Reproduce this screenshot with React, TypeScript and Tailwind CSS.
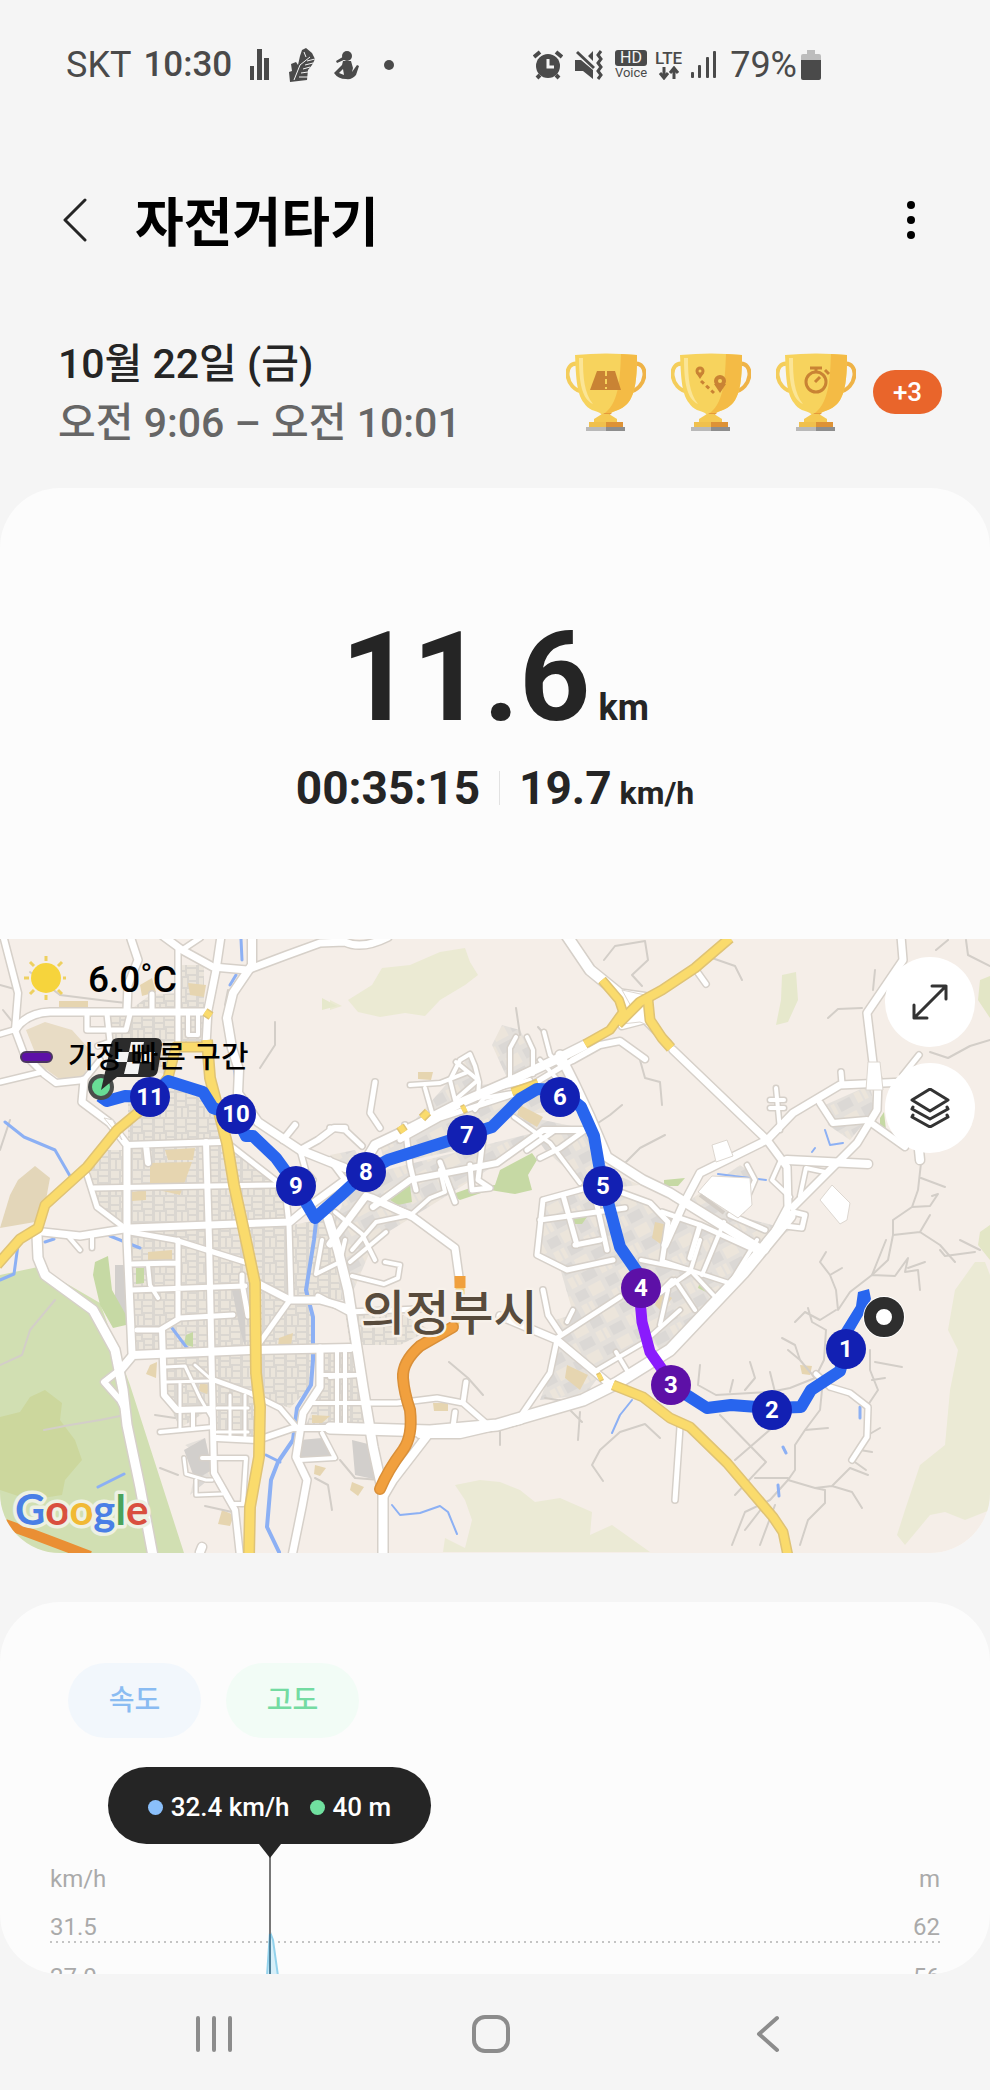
import React, { useState } from 'react';

interface Road {
  d: string;
  w: number;
}

interface KmMarker {
  label: string;
  x: number;
  y: number;
  fastest?: boolean;
}

const whiteRoads: Road[] = [
  // north west
  { d: 'M4 939 L18 993 L15 1030 L24 1054 L44 1074 L56 1083 L84 1080', w: 6 },
  { d: 'M15 1030 Q26 1013 50 1012 L208 1012', w: 7 },
  { d: 'M0 1034 L17 1029 M0 1082 L42 1072', w: 5 },
  { d: 'M131 939 L138 960 L128 985 L127 1010', w: 7 },
  { d: 'M178 950 L178 1048 M152 994 L152 1010 M87 1014 L87 1030 L126 1030 L130 1014 M107 1014 L110 1042 L98 1046', w: 5 },
  { d: 'M163 936 L182 950 L213 967 L247 970 L287 955 L320 943 L345 942 Q362 950 388 937', w: 7 },
  { d: 'M182 950 L200 938', w: 5 },
  { d: 'M221 936 L216 970 L208 1010 L206 1045', w: 7 },
  { d: 'M252 936 L252 965 L233 993 L227 1018 L232 1048 L239 1070 L238 1093 L258 1122 L300 1150 L345 1168', w: 8 },
  { d: 'M188 1014 L188 1035 L198 1035 L198 1014', w: 4 },
  { d: 'M84 1080 L82 1102 L110 1123 L127 1145 L127 1240 L132 1353', w: 7 },
  { d: 'M100 1060 L84 1080', w: 5 },
  { d: 'M127 1145 L220 1142 M146 1145 L148 1163', w: 6 },
  { d: 'M93 1188 L275 1185', w: 5 },
  { d: 'M43 1232 L80 1236 L130 1228 L290 1222 L308 1207 L345 1180', w: 7 },
  { d: 'M206 1142 L209 1240 L214 1473 L235 1510 L240 1556', w: 6 },
  { d: 'M226 1142 L285 1188 L289 1225 L291 1297', w: 5 },
  { d: 'M283 1140 L295 1125 M300 1150 L318 1140 L334 1128 L345 1128', w: 6 },
  { d: 'M300 1150 L306 1172 L313 1180', w: 5 },
  { d: 'M87 1175 L97 1207 L130 1232 L175 1240 L245 1262', w: 5 },
  { d: 'M68 1236 L80 1250 M92 1236 L92 1248', w: 4 },
  // west
  { d: 'M132 1290 L245 1286 M132 1264 L177 1263 M137 1330 L160 1330 L180 1318 L233 1315 M178 1240 L178 1318', w: 5 },
  { d: 'M148 1265 L150 1285 L158 1298', w: 4 },
  { d: 'M118 1373 L133 1355 L250 1350 L350 1348', w: 8 },
  { d: 'M162 1330 L164 1395 L177 1410 L212 1409', w: 6 },
  { d: 'M165 1367 L185 1366 L200 1398 L213 1420 M166 1382 L208 1381 M195 1365 L212 1380 M180 1382 L180 1430', w: 3 },
  { d: 'M160 1432 L213 1427 M193 1411 L193 1428', w: 4 },
  { d: 'M217 1438 L258 1440 L293 1428 L330 1428', w: 6 },
  { d: 'M230 1395 L230 1436 M245 1395 L245 1436 M217 1408 L248 1408 M217 1432 L248 1432', w: 3 },
  { d: 'M202 1458 L246 1458 L243 1504 L234 1504', w: 4 },
  { d: 'M184 1458 L186 1474 L206 1480 L212 1480 M196 1480 L196 1495 L222 1494', w: 3 },
  { d: 'M257 1283 L290 1300 L320 1300 L345 1307', w: 7 },
  { d: 'M290 1300 L258 1345', w: 5 },
  { d: 'M214 1380 L250 1393 L280 1408 L297 1428', w: 5 },
  { d: 'M242 1275 L242 1283 L248 1316', w: 5 },
  { d: 'M320 1348 L320 1387 L303 1413 L296 1457 L307 1480 L302 1507 L292 1556', w: 7 },
  { d: 'M322 1433 L335 1458 L300 1460 M310 1403 L362 1403 M320 1375 L358 1375 M337 1350 L337 1426', w: 4 },
  { d: 'M322 1240 L316 1274 L340 1262 L345 1240', w: 4 },
  // centre
  { d: 'M328 1218 L338 1250 L348 1290 L363 1387 L373 1447 L383 1493 L383 1556', w: 9 },
  { d: 'M318 1296 L348 1312 L440 1308', w: 5 },
  { d: 'M345 1180 L366 1172 M345 1180 L330 1160', w: 5 },
  { d: 'M330 1244 L366 1196 L372 1198 L413 1217 L455 1248 L460 1284', w: 7 },
  { d: 'M335 1212 L362 1234 L375 1260 M352 1250 L376 1222 L410 1215 M350 1262 L386 1232', w: 4 },
  { d: 'M385 1262 L400 1265 L398 1278 L384 1284 L352 1276', w: 4 },
  { d: 'M373 1207 L410 1180 L497 1163 L543 1130 L583 1130', w: 6 },
  { d: 'M405 1125 L410 1165 L416 1190 M440 1162 L455 1202 M484 1130 L478 1180 L490 1188 L472 1190 L470 1165', w: 5 },
  { d: 'M375 1200 L392 1206 L412 1214 L430 1198 L445 1192 L440 1170', w: 4 },
  { d: 'M585 1045 L555 1060 L517 1078 L460 1103 L413 1127 L375 1145 L363 1165', w: 9 },
  { d: 'M573 1060 L520 1092 L440 1118 L400 1140', w: 5 },
  { d: 'M573 1060 L600 1045 L620 1041 L645 1059', w: 6 },
  { d: 'M410 1085 L440 1083 L468 1072 M425 1088 L433 1116 M450 1080 L455 1100 L478 1080 L456 1062', w: 4 },
  { d: 'M450 1080 L460 1060 L470 1054 L475 1066 L479 1082 L478 1098', w: 4 },
  { d: 'M475 1110 L490 1090 L530 1080 M484 1098 L512 1093', w: 4 },
  { d: 'M516 1037 L510 1048 L510 1078 M527 1037 L533 1050 L533 1074 M544 1032 L550 1055 L560 1065 M540 1060 L556 1078', w: 4 },
  { d: 'M375 1082 L370 1113 L380 1128 M330 1128 L345 1130 L362 1146', w: 5 },
  { d: 'M514 1117 L550 1143 L580 1183', w: 4 },
  { d: 'M527 1150 L555 1130 L580 1130 M540 1158 L560 1148 L585 1130', w: 5 },
  { d: 'M543 1200 L590 1187 M543 1200 L537 1255 L567 1270 L613 1260 M540 1220 L625 1208 M563 1195 L577 1245 M593 1187 L607 1250 M575 1245 L600 1240', w: 5 },
  { d: 'M567 936 L590 970 L617 992 L636 1015', w: 10 },
  { d: 'M617 992 L645 996 M622 1026 L645 1020 L668 1043', w: 6 },
  { d: 'M560 1055 L575 1085 L590 1117 L607 1157 L643 1180 L670 1193 L757 1247', w: 9 },
  { d: 'M620 1192 L650 1203 L668 1222 L662 1262', w: 5 },
  { d: 'M673 1050 L767 1140 L787 1167 L788 1207 L765 1250', w: 7 },
  { d: 'M901 936 L903 960 L867 1013 L873 1063 L878 1080 L877 1110 L857 1143 L793 1207', w: 7 },
  { d: 'M905 1082 L840 1085 L793 1113 L767 1140 L700 1173 L683 1205 L665 1245', w: 7 },
  { d: 'M787 1160 L868 1164', w: 8 },
  { d: 'M820 1103 L833 1123 L867 1120 L905 1147', w: 6 },
  { d: 'M841 1072 L842 1084 M919 1055 L903 1075 M696 970 L706 984', w: 5 },
  { d: 'M776 1088 L780 1130 M770 1100 L784 1100 M770 1108 L784 1108', w: 4 },
  { d: 'M780 1162 L772 1180 L790 1197 M800 1196 L806 1168 L825 1172 M747 1165 L755 1180 L742 1210', w: 4 },
  { d: 'M793 1212 L805 1215 L802 1228 L785 1226 M730 1215 L765 1230 M662 1212 L700 1225 L755 1250 M700 1225 L690 1258', w: 5 },
  { d: 'M919 1150 L920 1160', w: 8 },
  { d: 'M757 1240 L720 1300 M724 1222 L702 1275 M665 1262 L735 1285', w: 4 },
  { d: 'M641 1260 L690 1270 L718 1300 M650 1300 L690 1272 L700 1240 M640 1312 L672 1280 M675 1280 L695 1310 M660 1325 L668 1290', w: 4 },
  // south
  { d: 'M330 1428 L430 1431 L497 1425 L583 1400 L617 1383 L670 1350 L743 1273 L790 1216', w: 11 },
  { d: 'M420 1434 L460 1434 L520 1420', w: 8 },
  { d: 'M430 1432 L393 1480 L383 1497 L383 1552', w: 8 },
  { d: 'M500 1316 L557 1340 L613 1387', w: 7 },
  { d: 'M557 1340 L550 1373 L518 1420 M557 1338 L620 1297 M543 1290 L548 1315 L560 1333', w: 5 },
  { d: 'M370 1403 L397 1403 L437 1398 L463 1403 L487 1424 M463 1403 L466 1382 M453 1427 L455 1412', w: 5 },
  { d: 'M597 1370 L643 1343 L680 1310 M616 1352 L628 1372 M567 1322 L573 1310', w: 4 },
  { d: 'M330 1348 L357 1348 M330 1377 L360 1375 M345 1348 L345 1428', w: 4 },
  { d: 'M830 1387 L850 1393 L868 1407 L867 1437 L852 1460 M816 1374 L830 1387', w: 5 },
  { d: 'M680 1427 L675 1500', w: 5 },
  { d: 'M37 1235 L38 1258 L45 1275 L93 1310 L115 1350 L123 1390 L127 1425 L140 1487 L153 1556', w: 9 },
  { d: 'M122 1368 L104 1382 L120 1400 L126 1412', w: 6 },
  { d: 'M200 1552 L202 1547', w: 8 },
];

const yellowRoads: Road[] = [
  { d: 'M-3 1265 L20 1239 L38 1228 L45 1205 L87 1167 L117 1130 L147 1105 L168 1078 L176 1047 L206 1047', w: 8 },
  { d: 'M207 1040 L210 1078 L227 1143 L234 1185 L247 1245 L255 1283 L256 1373 L260 1407 L259 1457 L250 1507 L249 1556', w: 9 },
  { d: 'M602 980 L619 1000 L623 1012 L610 1030 L585 1044', w: 7 },
  { d: 'M618 1024 L640 1002 L662 990 L695 968 L730 938', w: 8 },
  { d: 'M648 1000 L650 1020 L662 1038 L671 1048', w: 8 },
  { d: 'M613 1385 L643 1397 L670 1418 L690 1427 L727 1463 L773 1517 L783 1532 L788 1556', w: 8 },
  { d: 'M512 1092 L538 1083 M422 1118 L428 1112 M462 1110 L466 1108 M400 1126 L404 1132 M205 1012 L211 1016 M598 1378 L602 1376', w: 6 },
];

const rivers: Road[] = [
  { d: 'M316 1222 L314 1240 L306 1290 L313 1317 L313 1360 L311 1385 L297 1408 L293 1440 L278 1462 L271 1480 L267 1527 L279 1552', w: 4 },
  { d: 'M266 1455 L280 1462', w: 3 },
  { d: 'M241 939 L242 960 M236 975 L230 985 M233 1060 L237 1090', w: 3 },
  { d: 'M5 1122 L24 1137 L55 1150 L70 1176 M172 1328 L187 1348 M0 1280 L14 1274 L18 1245', w: 3 },
  { d: 'M392 1505 L400 1515 L420 1513 L440 1506 L448 1512 L457 1534', w: 2 },
  { d: 'M632 1400 L620 1415 L612 1433 M825 1130 L830 1145 L843 1143 M812 1152 L815 1148 M718 1174 L766 1180', w: 2 },
  { d: 'M860 1407 L860 1418 M783 1447 L786 1453 M778 1485 L779 1496 M98 1487 L124 1474 M45 1242 L54 1239 M110 1236 L120 1240 L140 1248', w: 3 },
];

// Footpaths and mountain trails
const trails = [
  'M921 1163 L918 1190 L912 1207 L893 1220 L893 1235 L920 1232 L940 1245 L955 1262 M912 1207 L930 1206 L938 1194 L932 1196 M920 1232 L930 1215 M921 1178 L945 1187 M893 1235 L888 1260 L872 1275',
  'M886 1240 L878 1260 L872 1275 L895 1276 L908 1258 L905 1272 L918 1270 L920 1290 M908 1268 L925 1262 M872 1275 L850 1292 L838 1310 L836 1290 L830 1275 L820 1262 L826 1252 M830 1275 L842 1268',
  'M836 1310 L820 1320 L805 1312 L795 1322 M826 1330 L812 1322 L808 1308 M826 1330 L824 1360 L815 1378 L800 1360 L795 1345 L782 1338 M800 1360 L788 1350',
  'M700 1365 L698 1385 L716 1395 M750 1362 L755 1378 L745 1390 M770 1372 L775 1392 M730 1392 L733 1380 M815 1378 L790 1388 L770 1392 L716 1395',
  'M822 1390 L820 1410 L805 1430 L795 1445 L795 1470 L788 1480 L815 1488 L832 1486 L850 1468 L868 1475 M815 1488 L825 1490 L825 1503 L808 1520 L800 1545 M832 1486 L852 1492 L862 1508 M805 1430 L828 1428',
  'M720 1415 L766 1462 L735 1495 M735 1460 L772 1428 M755 1478 L788 1478 M788 1480 L770 1500 L745 1512 L732 1545 M775 1505 L760 1545 M762 1508 L745 1530',
  'M870 1350 L870 1370 L878 1390 L868 1405 M875 1362 L902 1367 M872 1380 L885 1378 M868 1435 L880 1428 M860 1450 L872 1452 M852 1460 L866 1470',
  'M660 1438 L645 1424 L620 1432 L600 1450 L592 1465 L603 1481 M580 1412 L578 1440 M545 1398 L570 1402 M560 1400 L582 1422 M500 1430 L500 1445',
  'M449 1362 L468 1378 L483 1395 M640 1060 L645 1078 L660 1082 L662 1105 M622 1105 L610 1115 L595 1125 M625 1163 L640 1148 L665 1135',
  'M604 960 L615 946 L645 941 L648 960 L632 975 L642 986 M828 1018 L838 1009 L862 1008 M875 970 L873 990 M712 958 L735 966 L742 980 M930 1052 L948 1058 L970 1046 L990 1040',
  'M966 940 L968 955 L990 966 M936 950 L948 940 M0 985 L18 990 M3 1010 L15 1025 M260 1068 L275 1045 L275 1022 M228 990 L225 1005 M30 972 L60 995 L100 1000 L126 1003',
  'M516 1008 L520 1035 M538 1027 L545 1035 M0 1365 L22 1355 L30 1330 L55 1300 M44 1430 L70 1425 L100 1420 L125 1415 M155 1415 L175 1418 M160 1468 L178 1475 M960 1240 L980 1250 M940 1250 L945 1256 L975 1252',
  'M10 1120 L0 1150 M315 1478 L328 1485 L332 1510 M205 1506 L232 1512 M340 1460 L355 1478 L380 1480',
];

// Built-up blocks, filled with the small street pattern
const blocksStraight = [
  'M128 1100 L165 1085 L210 1095 L222 1142 L128 1145 Z',
  'M128 1147 L225 1144 L246 1250 L256 1350 L134 1352 L128 1240 Z',
  'M95 1150 L127 1150 L127 1228 L98 1205 L88 1175 Z',
  'M232 1150 L285 1190 L290 1225 L290 1298 L256 1283 L240 1200 Z',
  'M258 1290 L312 1300 L312 1385 L290 1408 L260 1398 Z',
  'M292 1225 L345 1215 L345 1300 L292 1297 Z',
  'M164 1355 L255 1352 L258 1440 L214 1438 L212 1408 L180 1428 L164 1395 Z',
  'M320 1350 L358 1350 L372 1430 L305 1428 L320 1390 Z',
  'M180 965 L204 965 L204 1010 L130 1010 L150 995 L178 993 Z',
  'M108 1016 L206 1016 L206 1045 L176 1045 L168 1075 L110 1060 Z',
  'M385 1305 L345 1312 L350 1345 L400 1345 L430 1330 Z',
];
const blocksTilted = [
  'M366 1175 L545 1130 L500 1162 L440 1200 L375 1240 L345 1310 L330 1240 L345 1195 Z',
  'M330 1155 L355 1150 L366 1172 L345 1175 Z',
  'M380 1145 L440 1105 L520 1090 L560 1065 L580 1110 L510 1115 L460 1150 L385 1165 Z',
  'M450 1080 L470 1055 L480 1085 L530 1080 L460 1103 L415 1120 Z',
  'M502 1025 L520 1030 L535 1060 L530 1075 L508 1080 L492 1045 Z',
  'M520 1115 L590 1130 L605 1170 L640 1185 L590 1190 L545 1150 Z',
  'M545 1202 L600 1185 L625 1195 L665 1215 L755 1248 L735 1290 L660 1350 L610 1290 L560 1268 L538 1255 Z',
  'M555 1320 L620 1300 L665 1330 L600 1370 L560 1340 Z',
  'M560 1268 L620 1260 L640 1300 L575 1320 Z',
  'M560 1345 L600 1375 L585 1395 L540 1400 Z',
  'M683 1205 L740 1165 L755 1175 L735 1215 L790 1230 L760 1250 L670 1200 Z',
  'M825 1105 L870 1085 L875 1110 L850 1140 L828 1125 Z',
  'M200 1455 L185 1445 L205 1438 L214 1475 L190 1495 Z',
];

const tanPlots = [
  'M150 1163 L192 1162 L180 1195 L150 1188 Z', 'M140 985 L152 978 L156 992 L142 996 Z', 'M188 983 L206 985 L204 997 L190 995 Z',
  'M132 1192 L146 1190 L146 1200 L132 1201 Z', 'M148 1252 L172 1250 L172 1260 L148 1261 Z', 'M165 1150 L195 1148 L193 1160 L168 1160 Z',
  'M279 1338 L293 1333 L291 1345 L278 1346 Z', 'M312 1415 L330 1416 L322 1423 L312 1423 Z', 'M150 1365 L157 1362 L156 1378 L146 1374 Z',
  'M200 1383 L210 1385 L207 1394 L199 1391 Z', 'M222 1510 L234 1515 L230 1526 L218 1524 Z', 'M315 1465 L326 1468 L320 1476 L314 1474 Z',
  'M520 1105 L543 1117 L537 1127 L517 1115 Z', 'M655 1222 L668 1225 L662 1245 L652 1238 Z', 'M567 1365 L588 1375 L580 1390 L565 1378 Z',
  'M433 1403 L448 1403 L448 1411 L434 1411 Z', 'M352 1482 L364 1487 L358 1496 L350 1490 Z', 'M418 1072 L433 1072 L431 1080 L418 1079 Z',
  'M660 1290 L672 1298 L662 1312 L655 1305 Z', 'M59 1001 L88 1001 L88 1008 L59 1007 Z', 'M800 1365 L812 1366 L810 1375 L802 1374 Z',
];

const greenPlots = [
  'M95 1262 L108 1256 L112 1290 L126 1315 L126 1325 L113 1328 L100 1305 L93 1275 Z',
  'M500 1170 L532 1153 L537 1160 L528 1175 L532 1190 L515 1194 L490 1190 L460 1200 L450 1195 L470 1188 L495 1185 Z',
  'M390 1200 L410 1185 L412 1202 L398 1205 Z', 'M136 1268 L144 1268 L144 1283 L136 1284 Z', 'M186 1335 L193 1332 L193 1347 L184 1344 Z',
  'M575 1215 L590 1213 L582 1224 L572 1224 Z', 'M664 1180 L685 1178 L678 1186 L664 1186 Z', 'M700 1282 L712 1288 L706 1292 L698 1288 Z', 'M880 1118 L884 1112 L886 1130 L880 1126 Z',
];

const route = 'M100 1096 L107 1101 L125 1096 L150 1097 L168 1081 L203 1092 L213 1108 L236 1116 L246 1136 L253 1136 L276 1158 L297 1187 L315 1218 L340 1196 L366 1172 L388 1160 L467 1135 L492 1127 L520 1099 L537 1089 L560 1090 L581 1107 L594 1136 L599 1165 L604 1187 L620 1247 L640 1276 M671 1385 L707 1408 L731 1405 L772 1408 L801 1407 L811 1390 L840 1371 L846 1349 L845 1332';

const kmMarkers: KmMarker[] = [
  { label: '11', x: 150, y: 1097 },
  { label: '10', x: 236, y: 1114 },
  { label: '9', x: 296, y: 1186 },
  { label: '8', x: 366, y: 1172 },
  { label: '7', x: 467, y: 1135 },
  { label: '6', x: 560, y: 1097 },
  { label: '5', x: 603, y: 1186 },
  { label: '4', x: 641, y: 1288, fastest: true },
  { label: '3', x: 671, y: 1385, fastest: true },
  { label: '2', x: 772, y: 1410 },
  { label: '1', x: 846, y: 1349 },
];

function StatusBar() {
  return (
    <div className="flex shrink-0 items-center justify-between pt-11 pr-[169px] pl-[66px] text-4xl leading-[42px] text-[#4a4a4a]">
      <div className="flex items-center">
        <span>SKT</span>
        <span className="ml-3 text-[35px] font-medium">10:30</span>
        <svg className="ml-4 h-8 w-6" viewBox="0 0 24 32" fill="currentColor">
          <rect x="2" y="17" width="4" height="14" />
          <rect x="9" width="5" height="31" />
          <rect x="16" y="9" width="5" height="22" />
        </svg>
        <svg className="ml-4 h-9 w-7" viewBox="0 0 28 36" fill="currentColor">
          <path d="M14 3 L18 1 L24 6 L27 12 L24 18 L20 23 L19 33 L2 35 L1 25 L4 24 L3 17 L8 15 L10 18 L12 9 Z" />
          <path d="M22 10 L12 18 L6 33 M16 5 L18 10" fill="none" stroke="#f5f5f5" strokeWidth="1" />
          <path d="M17 18 L25 16 M15 22 L22 20 M13 26 L20 25 M11 30 L20 30 M19 14 L27 12" stroke="#f5f5f5" strokeWidth="1" />
        </svg>
        <svg className="ml-4 h-8 w-7" viewBox="0 0 28 32" fill="currentColor">
          <circle cx="15" cy="7" r="5" />
          <path d="M4 12 L14 6 L14 10 L5 14 Z M11 12 L19 12 L21 19 L20 23 L25 16 L27 17 L24 26 Q20 31 14 30 Q6 30 2 24 L10 16 Z" />
          <path d="M7 24 L11 20 L12 26 Z" fill="#f5f5f5" />
        </svg>
        <span className="ml-6 size-[10px] rounded-full bg-[#4a4a4a]" />
      </div>
      <div className="flex items-center">
        <svg className="size-[30px]" viewBox="0 0 30 30">
          <circle cx="15" cy="16" r="12" fill="currentColor" />
          <path d="M1 7 L7 2 M23 2 L29 7 M7 25 L4 28 M23 25 L26 28" stroke="currentColor" strokeWidth="4" />
          <path d="M15 9 V17 H21" fill="none" stroke="#f5f5f5" strokeWidth="3" />
        </svg>
        <svg className="ml-3 h-[30px] w-7" viewBox="0 0 28 30" fill="currentColor">
          <path d="M0 10 H6 L18 20 V29 L8 21 H0 Z M13 6 L18 1 V11 Z" />
          <path d="M2 2 L19 18" stroke="currentColor" strokeWidth="3" />
          <path d="M26 1 L23 5 L26 9 L23 13 L26 17 L23 21 L26 25 L23 29" fill="none" stroke="currentColor" strokeWidth="3" />
        </svg>
        <span className="ml-3 flex w-8 flex-col items-center text-[13px] leading-[14px]">
          <span className="w-full rounded-[3px] bg-[#4a4a4a] text-center text-base leading-4 text-[#f5f5f5]">HD</span>
          Voice
        </span>
        <span className="ml-2 flex flex-col items-center text-[17px] leading-4 font-medium">
          LTE
          <svg className="h-[14px] w-6" viewBox="0 0 24 14" fill="none" stroke="currentColor" strokeWidth="3">
            <path d="M7 1 V11 M3 7 L7 12 L11 7 M17 13 V3 M13 7 L17 2 L21 7" />
          </svg>
        </span>
        <svg className="ml-2 h-7 w-7" viewBox="0 0 28 28" fill="currentColor">
          <rect x="1" y="21" width="3" height="6" rx="1" />
          <rect x="8" y="14" width="3" height="13" rx="1" />
          <rect x="16" y="6" width="3" height="21" rx="1" />
          <rect x="23" width="3" height="27" rx="1" />
        </svg>
        <span className="ml-3">79%</span>
        <svg className="ml-1 h-[30px] w-5" viewBox="0 0 20 30">
          <path d="M6 0 H14 V4 H18 Q20 4 20 6 V10 H0 V6 Q0 4 2 4 H6 Z" fill="#bdbdbd" />
          <path d="M0 10 H20 V28 Q20 30 18 30 H2 Q0 30 0 28 Z" fill="currentColor" />
        </svg>
      </div>
    </div>
  );
}

function Trophy({ children }: { children: React.ReactNode }) {
  return (
    <svg className="h-[78px] w-20" viewBox="0 0 80 78">
      <path d="M13 11 C-4 7 -2 37 18 39" fill="none" stroke="#f4cd5b" strokeWidth="4" />
      <path d="M67 11 C84 7 82 37 62 39" fill="none" stroke="#efb347" strokeWidth="4" />
      <path d="M9 2 Q40 -1 71 2 C71 22 70 42 61 51 C55 57 48 58 45 60 L43 62 H36 L34 60 C30 58 22 57 18 50 C10 40 10 20 9 2 Z" fill="#f7d35d" />
      <path d="M55 1 L71 2 C71 22 70 42 61 51 C55 57 48 58 45 60 L39 60 C54 48 54 22 55 1 Z" fill="#f4bb45" />
      <path d="M13 5 L17 5 C17 24 18 40 27 51 C16 46 13 30 13 5 Z" fill="#fbe596" />
      <path d="M37 60 H46 L42 63 Z" fill="#e59a3a" />
      <path d="M36 61 H43 L51 66 V69 H28 V66 Z" fill="#f5c952" />
      <path d="M23 69 H40 V74 H23 Z" fill="#f0c04d" />
      <path d="M40 69 H57 V74 H40 Z" fill="#dd9236" />
      <path d="M20 74 H40 V78 H20 Z" fill="#b9b9b9" />
      <path d="M40 74 H59 V78 H40 Z" fill="#8d8d8d" />
      {children}
    </svg>
  );
}

function Summary() {
  return (
    <section className="mt-[85px] flex shrink-0 items-start justify-between pr-12 pb-[35px] pl-[58px]">
      <div className="text-[41px] leading-[59px] font-medium">
        <p className="text-[#252525]">10월 22일 (금)</p>
        <p className="text-[#666]">오전 9:06 – 오전 10:01</p>
      </div>
      <div className="mt-[18px] flex items-center gap-[25px]">
        <Trophy>
          <path d="M31 18 H49 L55 37 H24 Z" fill="#c98334" />
          <path d="M40 18 V36" stroke="#f7d35d" strokeWidth="2" strokeDasharray="5 3" />
        </Trophy>
        <Trophy>
          <g fill="none" stroke="#c98334" strokeWidth="3">
            <circle cx="29" cy="18" r="3" />
            <circle cx="49" cy="28" r="4" strokeWidth="4" />
            <path d="M30 28 L43 40" strokeDasharray="4 3" />
          </g>
          <path d="M25 20 H33 L29 26 Z M43 31 H55 L49 40 Z" fill="#c98334" />
        </Trophy>
        <Trophy>
          <g fill="none" stroke="#c98334" strokeWidth="3">
            <circle cx="40" cy="29" r="10" />
            <path d="M34 15 H46 M40 15 V19 M49 17 L53 21 M39 29 L44 24" />
          </g>
        </Trophy>
        <button className="-ml-2 h-11 w-[69px] rounded-full bg-[#e9652b] text-[26px] leading-none font-medium text-white">+3</button>
      </div>
    </section>
  );
}

function RouteMap() {
  return (
    <div className="relative">
      <svg className="block aspect-[990/614] w-full" viewBox="0 939 990 614" preserveAspectRatio="xMidYMid slice">
        <defs>
          <pattern id="straight" width="22" height="26" patternUnits="userSpaceOnUse">
            <rect width="22" height="26" fill="#dbd7d1" />
            <path d="M1 1 H9 V8 H1 Z M11 1 H20 V5 H11 Z M11 7 H20 V12 H11 Z M1 10 H9 V14 H1 Z M1 16 H5 V25 H1 Z M7 16 H11 V25 H7 Z M13 14 H20 V18 H13 Z M13 20 H20 V25 H13 Z" fill="#ebe5db" />
          </pattern>
          <pattern id="tilted" width="34" height="30" patternUnits="userSpaceOnUse" patternTransform="rotate(-28)">
            <rect width="34" height="30" fill="#e4e0db" />
            <path d="M2 2 H14 V12 H2 Z M17 17 H31 V27 H17 Z" fill="#dbd8d5" />
            <path d="M17 2 H31 V13 H17 Z M2 16 H8 V27 H2 Z M10 16 H14 V27 H10 Z" fill="#ece5db" />
          </pattern>
        </defs>
        <rect y="939" width="990" height="614" fill="#f5eee8" />

        {/* Parks and hills */}
        <path d="M0 1275 L38 1267 L100 1303 L117 1350 L130 1385 L184 1553 L0 1553 Z" fill="#d1dfb2" />
        <path d="M0 1417 L20 1412 L30 1397 L45 1390 L62 1403 L60 1420 L75 1440 L82 1460 L65 1480 L62 1495 L30 1500 L0 1490 Z" fill="#ccd79d" />
        <path d="M0 1228 L10 1195 L18 1180 L35 1166 L50 1178 L45 1205 L35 1222 Z" fill="#e3d6b9" />
        <path d="M26 1030 L45 1022 L72 1030 L90 1050 L84 1080 L58 1078 L40 1065 Z" fill="#e8dcc5" />
        <path d="M348 1000 L372 985 L382 968 L410 965 L440 952 L465 948 L470 962 L478 975 L465 985 L440 1000 L425 1016 L405 1013 L380 1017 L358 1012 Z M330 1000 L342 1006 L330 1010 Z" fill="#ebead3" />
        <path d="M322 998 L337 1006 L322 1010 Z M782 975 L796 972 L798 1000 L788 1022 L776 1025 L781 1000 Z" fill="#e6e8cc" />
        <path d="M980 980 L990 976 V1018 L978 1000 Z M980 1232 L990 1225 V1260 L978 1245 Z" fill="#e3e6c6" />
        <path d="M975 1262 L985 1262 L990 1275 V1510 L965 1520 L945 1512 L930 1515 L905 1545 L897 1535 L905 1510 L920 1465 L945 1445 L950 1390 L958 1350 L948 1330 L955 1290 Z" fill="#ebead5" />
        <path d="M443 1552 L445 1538 L465 1548 L472 1520 L465 1500 L455 1485 L480 1480 L500 1482 L520 1490 L535 1502 L560 1498 L592 1512 L590 1535 L612 1525 L650 1552 Z" fill="#ebead5" />

        {blocksStraight.map((d) => <path key={d} d={d} fill="url(#straight)" />)}
        {blocksTilted.map((d) => <path key={d} d={d} fill="url(#tilted)" />)}
        <path d="M184 1450 L205 1438 L212 1470 L195 1480 Z M300 1440 L322 1438 L335 1455 L300 1458 Z M352 1440 L372 1445 L378 1480 L355 1475 Z M232 1290 L244 1288 L246 1350 L240 1330 Z M115 1265 L126 1265 L126 1315 L115 1310 Z" fill="#d2cfcc" />
        {tanPlots.map((d) => <path key={d} d={d} fill="#e6d5b0" />)}
        {greenPlots.map((d) => <path key={d} d={d} fill="#c6d9a4" />)}

        <g fill="none" strokeLinejoin="round" strokeLinecap="round">
          {trails.map((d) => <path key={d} d={d} stroke="#d3cec8" strokeWidth="2" />)}
          {rivers.map((r) => <path key={r.d} d={r.d} stroke="#8cb0f4" strokeWidth={r.w} />)}
          {whiteRoads.map((r) => <path key={r.d} d={r.d} stroke="#d6d0c9" strokeWidth={r.w + 3} />)}
          {whiteRoads.map((r) => <path key={r.d} d={r.d} stroke="#fff" strokeWidth={r.w} />)}
        </g>
        <path d="M698 1192 L712 1176 L750 1178 L752 1205 L738 1218 Z M820 1200 L832 1185 L850 1203 L847 1220 L840 1224 Z M712 1145 L727 1140 L733 1156 L716 1162 Z M622 990 L645 995 L652 1015 L660 1030 L640 1022 L622 1024 L632 1008 Z M868 1062 L880 1062 L883 1090 L866 1090 Z M104 1118 L113 1120 L122 1140 Z" fill="#fff" stroke="#ddd7d0" />
        <path d="M700 1195 L724 1213" stroke="#d3cdc6" strokeWidth="4" />

        <g fill="none" strokeLinejoin="round">
          {yellowRoads.map((r) => <path key={r.d} d={r.d} stroke="#dfc375" strokeWidth={r.w + 3} />)}
          {yellowRoads.map((r) => <path key={r.d} d={r.d} stroke="#fadb6c" strokeWidth={r.w} />)}
          <path d="M460 1276 V1306 Q456 1324 450 1330" stroke="#f4cf7c" strokeWidth="9" />
          <path d="M460 1276 V1288" stroke="#f0a03d" strokeWidth="11" />
          <path d="M453 1327 L420 1346 Q402 1362 403 1378 Q404 1392 410 1410 Q413 1436 403 1450 Q388 1470 380 1489" stroke="#d98f38" strokeWidth="12" strokeLinecap="round" />
          <path d="M453 1327 L420 1346 Q402 1362 403 1378 Q404 1392 410 1410 Q413 1436 403 1450 Q388 1470 380 1489" stroke="#f1a03e" strokeWidth="9" strokeLinecap="round" />
          <path d="M5 1524 Q36 1535 90 1556" stroke="#ea8f34" strokeWidth="10" />
        </g>

        <text x="361" y="1330" fontSize="48" fontWeight="500" fill="#584b3c" stroke="#f7f1ea" strokeWidth="5" strokeLinejoin="round" paintOrder="stroke">의정부시</text>

        {/* Recorded route */}
        <path d={route} fill="none" stroke="#2865ee" strokeWidth="12" strokeLinejoin="round" />
        <path d="M838 1335 L856 1306 L858 1292 L869 1289 L871 1299 L866 1310 L852 1334 Z" fill="#2865ee" />
        <path d="M640 1300 L642 1322 L650 1352 L671 1382" fill="none" stroke="#8a1bfc" strokeWidth="11" strokeLinejoin="round" />

        <circle cx="101" cy="1087" r="11" fill="#68dd96" stroke="#4a4d4b" strokeWidth="4" />
        <path d="M118 1038 H156 Q162 1038 162 1045 L158 1070 Q157 1077 150 1077 H117 L101 1090 L106 1068 L111 1044 Q112 1038 118 1038 Z" fill="#2b2b2b" />
        <path d="M131 1042 H144 L142 1052 H129 Z M117 1052 H129 L127 1062 H115 Z M142 1052 H155 L153 1062 H140 Z M127 1062 H140 L138 1074 H124 Z" fill="#f4f4f4" />

        {kmMarkers.map((m) => (
          <g key={m.label}>
            <circle cx={m.x} cy={m.y} r="20" fill={m.fastest ? '#5d10a7' : '#1220b3'} />
            <text x={m.x} y={m.y + 8} textAnchor="middle" fontSize="24" fontWeight="700" fill="#fff">{m.label}</text>
          </g>
        ))}
        <circle cx="884" cy="1317" r="21" fill="#fff" />
        <circle cx="884" cy="1317" r="14" fill="#fff" stroke="#2e2e2e" strokeWidth="12" />

        <text x="15" y="1525" fontSize="42" fontWeight="700" fontFamily="Lato, sans-serif" stroke="#eef1e3" strokeWidth="7" strokeLinejoin="round" paintOrder="stroke">
          <tspan fill="#4a7fe6">G</tspan>
          <tspan fill="#d94f3e">o</tspan>
          <tspan fill="#f1b935">o</tspan>
          <tspan fill="#4a7fe6">g</tspan>
          <tspan fill="#4aa25b">l</tspan>
          <tspan fill="#d94f3e">e</tspan>
        </text>
      </svg>

      <div className="absolute top-4 left-5 font-medium text-black">
        <div className="flex items-center gap-[22px]">
          <svg className="-ml-1 size-[50px]" viewBox="0 0 50 50">
            <circle cx="30" cy="23" r="15" fill="#f6d43c" />
            <path d="M30 1 V6 M30 40 V45 M8 23 H13 M47 23 H52 M14 7 L18 11 M46 7 L42 11 M14 39 L18 35 M46 39 L42 35" stroke="#eed060" strokeWidth="3" />
          </svg>
          <span className="text-[37px] leading-[46px]">6.0˚C</span>
        </div>
        <div className="mt-8 flex items-center gap-[15px]">
          <span className="h-3 w-[33px] rounded-full border-2 border-[#4b3760] bg-[#5d10a7]" />
          <span className="text-[30px] leading-10">가장 빠른 구간</span>
        </div>
      </div>

      <div className="absolute top-[18px] right-[15px] flex flex-col gap-4">
        <button aria-label="지도 확대" className="flex size-[90px] items-center justify-center rounded-full bg-white">
          <svg className="size-9" viewBox="0 0 36 36" fill="none" stroke="#333" strokeWidth="3" strokeLinecap="round" strokeLinejoin="round">
            <path d="M2 34 L34 2 M20 2 H34 V15 M2 21 V34 H15" />
          </svg>
        </button>
        <button aria-label="지도 유형" className="flex size-[90px] items-center justify-center rounded-full bg-white">
          <svg className="size-10" viewBox="0 0 40 40" fill="none" stroke="#333" strokeWidth="3" strokeLinejoin="round" strokeLinecap="round">
            <path d="M20 1 L38 12 L20 23 L2 12 Z M3 19 L2 21 L20 31 L38 21 L37 19 M3 27 L2 29 L20 39 L38 29 L37 27" />
          </svg>
        </button>
      </div>
    </div>
  );
}

function Chart() {
  const [series, setSeries] = useState({ speed: true, altitude: true });

  return (
    <section className="mt-[49px] min-h-0 flex-1 overflow-hidden rounded-[60px] bg-[#fcfcfc] pt-[61px]">
      <div className="flex gap-[25px] pl-[68px] text-[28px] font-medium">
        <button
          aria-pressed={series.speed}
          className="h-[75px] w-[133px] rounded-full bg-[#f2f7fc] text-[#8abcf2]"
          onClick={() => setSeries({ ...series, speed: !series.speed })}
        >
          속도
        </button>
        <button
          aria-pressed={series.altitude}
          className="h-[75px] w-[133px] rounded-full bg-[#f2fcf6] text-[#74dba2]"
          onClick={() => setSeries({ ...series, altitude: !series.altitude })}
        >
          고도
        </button>
      </div>

      <div className="relative mt-[29px] ml-[108px] flex h-[77px] w-[323px] items-center justify-center rounded-full bg-[#252525] pt-1 text-[26px] font-medium text-white">
        <span className="mr-2 size-[15px] rounded-full bg-[#8abffa]" />
        32.4 km/h
        <span className="mr-2 ml-5 size-[15px] rounded-full bg-[#70e09f]" />
        40 m
        <svg className="absolute top-full left-1/2 h-[132px] w-10 -translate-x-1/2" viewBox="0 0 40 132">
          <path d="M17 132 L20 88 L23 96 L28 132" fill="#d7eff9" stroke="#93d2ec" strokeWidth="2" />
          <path d="M20 12 V132" stroke="#777" strokeWidth="2" />
          <path d="M20 90 V132" stroke="#4d7f99" strokeWidth="2" />
          <path d="M9 0 H31 L20 14 Z" fill="#252525" />
        </svg>
      </div>

      <div className="px-[50px] text-2xl leading-7 text-[#aaa]">
        <div className="mt-[21px] flex justify-between">
          <span>km/h</span>
          <span>m</span>
        </div>
        <div className="mt-5 flex justify-between">
          <span>31.5</span>
          <span>62</span>
        </div>
        <svg className="block h-[2px] w-full">
          <line x2="100%" y1="1" y2="1" stroke="#c4c4c4" strokeWidth="2" strokeDasharray="2 4" />
        </svg>
        <div className="mt-5 flex justify-between">
          <span>27.0</span>
          <span>56</span>
        </div>
      </div>
    </section>
  );
}

function NavigationBar() {
  return (
    <nav className="grid h-[116px] shrink-0 grid-cols-3 place-items-center pt-1 pr-[84px] pl-[75px] text-[#8c8c8c]">
      <button aria-label="최근 앱">
        <svg className="h-[38px] w-10" viewBox="0 0 40 38" stroke="currentColor" strokeWidth="4" strokeLinecap="round">
          <path d="M4 3 V35 M20 3 V35 M36 3 V35" />
        </svg>
      </button>
      <button aria-label="홈">
        <svg className="size-10" viewBox="0 0 40 40" fill="none" stroke="currentColor" strokeWidth="4">
          <rect x="3" y="3" width="34" height="34" rx="11" />
        </svg>
      </button>
      <button aria-label="뒤로">
        <svg className="h-[38px] w-6" viewBox="0 0 24 38" fill="none" stroke="currentColor" strokeWidth="4" strokeLinecap="round" strokeLinejoin="round">
          <path d="M21 3 L3 19 L21 35" />
        </svg>
      </button>
    </nav>
  );
}

export default function App() {
  return (
    <div className="flex h-screen flex-col overflow-hidden bg-[#f5f5f5] font-['Roboto','Noto_Sans_CJK_KR',sans-serif]">
      <StatusBar />

      <header className="mt-[104px] flex h-[60px] shrink-0 items-center pr-[67px] pl-[63px]">
        <button aria-label="뒤로 가기">
          <svg className="h-11 w-6" viewBox="0 0 24 44" fill="none" stroke="#252525" strokeWidth="3" strokeLinecap="round" strokeLinejoin="round">
            <path d="M22 2 L2 22 L22 42" />
          </svg>
        </button>
        <h1 className="ml-12 pt-2 text-[53px] leading-[60px] font-bold text-black">자전거타기</h1>
        <button aria-label="더보기" className="ml-auto">
          <svg className="h-10 w-6" viewBox="0 0 24 40">
            <circle cx="12" cy="5" r="4" />
            <circle cx="12" cy="20" r="4" />
            <circle cx="12" cy="35" r="4" />
          </svg>
        </button>
      </header>

      <Summary />

      <section className="shrink-0 overflow-hidden rounded-[60px] bg-[#fcfcfc] text-[#252525]">
        <p className="pt-32 text-center text-[124px] leading-none font-bold">
          11.6<span className="ml-2 text-4xl leading-none">km</span>
        </p>
        <div className="mt-6 mb-[127px] flex items-center justify-center text-[46px] leading-[48px] font-bold">
          <span>00:35:15</span>
          <span className="mx-[19px] h-[34px] w-px bg-[#e2e2e2]" />
          <span>
            19.7<span className="ml-2 text-[32px] leading-none">km/h</span>
          </span>
        </div>
        <RouteMap />
      </section>

      <Chart />
      <NavigationBar />
    </div>
  );
}
